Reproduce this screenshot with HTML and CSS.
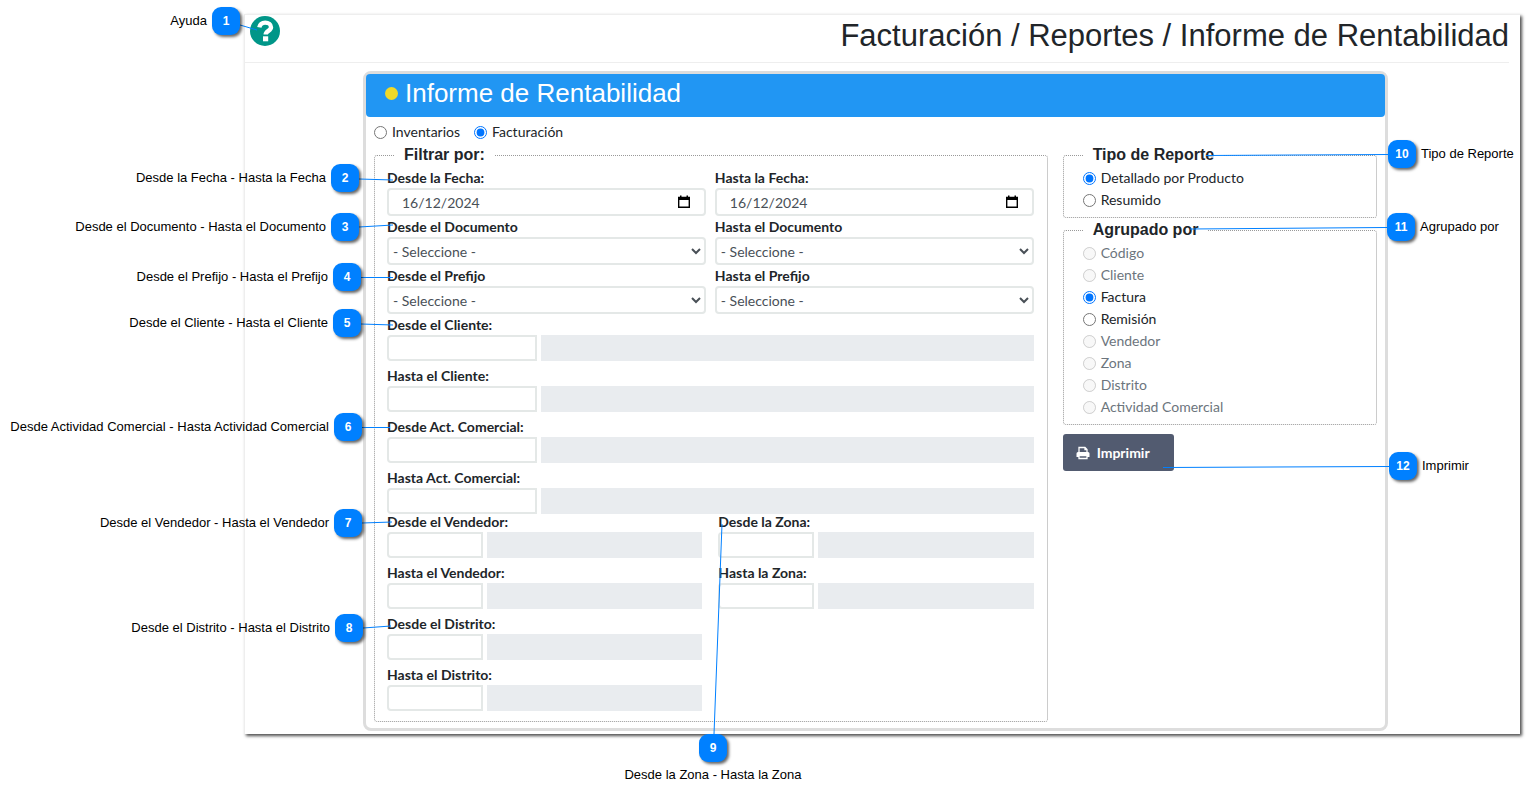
FILE: index.html
```
<!DOCTYPE html>
<html lang="es">
<head>
<meta charset="utf-8">
<title>Informe de Rentabilidad</title>
<link rel="stylesheet" href="styles.css">
</head>
<body>
<main class="sheet">
  <header class="top">
    <a class="help" href="#" aria-label="Ayuda">
      <svg viewBox="0 0 30 30" width="30" height="30" aria-hidden="true">
        <circle cx="15" cy="15" r="15" fill="#009688"/>
        <path d="M9.300 11.400C10 8 12.200 6.600 15.200 6.600C18.600 6.600 21 8.500 21 11.200C21 14.800 15.700 14.900 15.700 18.600" fill="none" stroke="#fff" stroke-width="4.400"/>
        <rect x="13" y="20.300" width="5.200" height="5" fill="#fff"/>
      </svg>
    </a>
    <h1>Facturación / Reportes / Informe de Rentabilidad</h1>
  </header>

  <form class="panel">
    <h2 class="panel-title"><span class="dot"></span>Informe de Rentabilidad</h2>
    <div class="modes">
      <label class="option"><input type="radio" name="modo">Inventarios</label>
      <label class="option"><input type="radio" name="modo" checked>Facturación</label>
    </div>
    <div class="columns">
      <fieldset class="box filters">
        <legend>Filtrar por:</legend>
        <div class="ranges">
          <div class="field"><label for="f1">Desde la Fecha:</label>
            <div class="date"><input id="f1" type="text" value="16/12/2024"><svg viewBox="0 0 14 14" width="14" height="14" aria-hidden="true"><path d="M1.7 2.5h10.6v9.8H1.7z" fill="none" stroke="#000" stroke-width="1.4"/><path d="M1 2h12v3H1zM3 .5h1.5V3H3zM9.500 .5H11V3H9.500z" fill="#000"/></svg></div></div>
          <div class="field"><label for="f2">Hasta la Fecha:</label>
            <div class="date"><input id="f2" type="text" value="16/12/2024"><svg viewBox="0 0 14 14" width="14" height="14" aria-hidden="true"><path d="M1.7 2.5h10.6v9.8H1.7z" fill="none" stroke="#000" stroke-width="1.4"/><path d="M1 2h12v3H1zM3 .5h1.5V3H3zM9.500 .5H11V3H9.500z" fill="#000"/></svg></div></div>
          <div class="field"><label for="d1">Desde el Documento</label><select id="d1"><option>- Seleccione -</option></select></div>
          <div class="field"><label for="d2">Hasta el Documento</label><select id="d2"><option>- Seleccione -</option></select></div>
          <div class="field"><label for="p1">Desde el Prefijo</label><select id="p1"><option>- Seleccione -</option></select></div>
          <div class="field"><label for="p2">Hasta el Prefijo</label><select id="p2"><option>- Seleccione -</option></select></div>
        </div>
        <div class="lookups wide">
          <div class="lookup"><label for="c1">Desde el Cliente:</label><div class="pair"><input id="c1" type="text"><input type="text" disabled aria-label="Nombre desde cliente"></div></div>
          <div class="lookup"><label for="c2">Hasta el Cliente:</label><div class="pair"><input id="c2" type="text"><input type="text" disabled aria-label="Nombre hasta cliente"></div></div>
          <div class="lookup"><label for="a1">Desde Act. Comercial:</label><div class="pair"><input id="a1" type="text"><input type="text" disabled aria-label="Nombre desde actividad"></div></div>
          <div class="lookup"><label for="a2">Hasta Act. Comercial:</label><div class="pair"><input id="a2" type="text"><input type="text" disabled aria-label="Nombre hasta actividad"></div></div>
        </div>
        <div class="split">
          <div class="lookups">
            <div class="lookup"><label for="v1">Desde el Vendedor:</label><div class="pair"><input id="v1" type="text"><input type="text" disabled aria-label="Nombre desde vendedor"></div></div>
            <div class="lookup"><label for="v2">Hasta el Vendedor:</label><div class="pair"><input id="v2" type="text"><input type="text" disabled aria-label="Nombre hasta vendedor"></div></div>
            <div class="lookup"><label for="t1">Desde el Distrito:</label><div class="pair"><input id="t1" type="text"><input type="text" disabled aria-label="Nombre desde distrito"></div></div>
            <div class="lookup"><label for="t2">Hasta el Distrito:</label><div class="pair"><input id="t2" type="text"><input type="text" disabled aria-label="Nombre hasta distrito"></div></div>
          </div>
          <div class="lookups">
            <div class="lookup"><label for="z1">Desde la Zona:</label><div class="pair"><input id="z1" type="text"><input type="text" disabled aria-label="Nombre desde zona"></div></div>
            <div class="lookup"><label for="z2">Hasta la Zona:</label><div class="pair"><input id="z2" type="text"><input type="text" disabled aria-label="Nombre hasta zona"></div></div>
          </div>
        </div>
      </fieldset>

      <div class="side">
        <fieldset class="box choices">
          <legend>Tipo de Reporte</legend>
          <label class="option"><input type="radio" name="tipo" checked>Detallado por Producto</label>
          <label class="option"><input type="radio" name="tipo">Resumido</label>
        </fieldset>
        <fieldset class="box choices">
          <legend>Agrupado por</legend>
          <label class="option off"><input type="radio" name="grupo" disabled>Código</label>
          <label class="option off"><input type="radio" name="grupo" disabled>Cliente</label>
          <label class="option"><input type="radio" name="grupo" checked>Factura</label>
          <label class="option"><input type="radio" name="grupo">Remisión</label>
          <label class="option off"><input type="radio" name="grupo" disabled>Vendedor</label>
          <label class="option off"><input type="radio" name="grupo" disabled>Zona</label>
          <label class="option off"><input type="radio" name="grupo" disabled>Distrito</label>
          <label class="option off"><input type="radio" name="grupo" disabled>Actividad Comercial</label>
        </fieldset>
        <button class="print" type="button">
          <svg viewBox="0 0 14 14" width="14" height="14" aria-hidden="true"><path d="M3 6.500V1.500h6L11 3.500v3M9 1.500v2h2" fill="none" stroke="#fff" stroke-width="1.300"/><path d="M2 6h10a1.500 1.500 0 0 1 1.500 1.500V11H11V9H3v2H.5V7.500A1.500 1.500 0 0 1 2 6z" fill="#fff"/><path d="M3 9.500h8v3H3z" fill="none" stroke="#fff" stroke-width="1.300"/></svg>
          Imprimir
        </button>
      </div>
    </div>
  </form>
</main>

<svg class="leads" width="1529" height="799" aria-hidden="true">
  <path d="M240 25L257 30M359 179L393 180M359 227L393 225M361 277.500H393M361 324L393 325M362 427.500H390M362 523L392 522M363 628L391 626M722 524L714 734M1206 155.500L1388 154.500M1190 229L1387 227.500M1163 467.500L1389 466.500"/>
</svg>
<div class="note before n1"><span>Ayuda</span><b>1</b></div>
<div class="note before n2"><span>Desde la Fecha - Hasta la Fecha</span><b>2</b></div>
<div class="note before n3"><span>Desde el Documento - Hasta el Documento</span><b>3</b></div>
<div class="note before n4"><span>Desde el Prefijo - Hasta el Prefijo</span><b>4</b></div>
<div class="note before n5"><span>Desde el Cliente - Hasta el Cliente</span><b>5</b></div>
<div class="note before n6"><span>Desde Actividad Comercial - Hasta Actividad Comercial</span><b>6</b></div>
<div class="note before n7"><span>Desde el Vendedor - Hasta el Vendedor</span><b>7</b></div>
<div class="note before n8"><span>Desde el Distrito - Hasta el Distrito</span><b>8</b></div>
<div class="note below n9"><b>9</b><span>Desde la Zona - Hasta la Zona</span></div>
<div class="note n10"><b>10</b><span>Tipo de Reporte</span></div>
<div class="note n11"><b>11</b><span>Agrupado por</span></div>
<div class="note n12"><b>12</b><span>Imprimir</span></div>
</body>
</html>
```

FILE: styles.css
```
* { box-sizing: border-box; }

body {
  margin: 0;
  min-height: 100vh;
  padding: 14px 9px 64px 244px;
  position: relative;
  background: #fff;
  color: #212529;
  font: 14px/20px Lato, sans-serif;
}

.sheet {
  padding: 0 11px 3px 0;
  border: 1px solid #eee;
  border-right-width: 0;
  border-bottom-width: 0;
  box-shadow: 2px 2px 3px rgba(0, 0, 0, .7);
}

.top {
  display: flex;
  justify-content: space-between;
  height: 48px;
  padding-left: 5px;
  border-bottom: 1px solid #eee;
}
.help { padding-top: 1px; }
.help svg { display: block; }
h1 {
  margin: 0;
  font: 400 31px/42px "Liberation Sans", Arial, sans-serif;
}

.panel {
  margin: 8px 121px 0 118px;
  padding-bottom: 6px;
  border: 3px solid #ddd;
  border-radius: 8px;
}
.panel-title {
  display: flex;
  align-items: center;
  gap: 7px;
  margin: 0;
  padding: 0 19px 4px;
  border-radius: 4px;
  background: #2196f3;
  color: #fff;
  font: 400 26px/39px "Liberation Sans", Arial, sans-serif;
}
.dot { width: 13px; height: 13px; border-radius: 50%; background: #f0d928; }

.modes { display: flex; gap: 14px; padding: 4px 8px 2px; }
.option { display: flex; align-items: center; gap: 5px; line-height: 22px; }
.option input { width: 13px; height: 13px; margin: 0; }
.off { color: #6c757d; }

.columns {
  display: grid;
  grid-template-columns: minmax(0, 15fr) minmax(0, 7fr);
  gap: 15px;
  padding: 0 8px;
}
.box {
  min-width: 0;
  margin: 0;
  border: 1px dotted #999;
  border-radius: 3px;
}
.box legend {
  padding: 0 10px;
  font: 700 16px/20px "Liberation Sans", Arial, sans-serif;
}
.filters { padding: 2px 13px 10px 12px; }
.filters legend { margin-left: 7px; }
.choices { padding: 2px 19px 6px; }

.ranges {
  display: grid;
  grid-template-columns: 1fr 1fr;
  column-gap: 9px;
}
.field { display: grid; }
.field label { line-height: 21px; font-weight: 700; }
input[type="text"], select {
  width: 100%;
  height: 28px;
  min-width: 0;
  border: 2px solid #e4e8e7;
  border-radius: 4px;
  background: #fff;
  color: #495057;
  font: 14px Lato, sans-serif;
}
.date { display: grid; align-items: center; }
.date input, .date svg { grid-area: 1 / 1; }
.date input { padding: 0 13px; }
.date svg { justify-self: end; margin-right: 15px; }

.lookups { display: grid; gap: 5px; align-content: start; }
.wide { margin-top: 1px; }
.lookup label { display: block; font-weight: 700; }
.pair { display: grid; grid-template-columns: 96px 1fr; gap: 4px; }
.wide .pair { grid-template-columns: 150px 1fr; }
.pair input[type="text"] { height: 26px; border-radius: 4px 0 0 4px; }
.pair input[type="text"]:disabled { border: 0; border-radius: 0; background: #e9ecef; }
.split {
  display: grid;
  grid-template-columns: 1fr 1fr;
  gap: 16px;
  margin-top: -2px;
}

.side { display: flex; flex-direction: column; gap: 2px; }
.print {
  display: flex;
  align-items: center;
  align-self: flex-start;
  gap: 7px;
  height: 37px;
  margin-top: 7px;
  padding: 0 24px 0 13px;
  border: 0;
  border-radius: 3px;
  background: #525b70;
  color: #fff;
  font: 700 14px Lato, sans-serif;
}

/* Numbered callouts laid over the form */
.leads { position: absolute; top: 0; left: 0; fill: none; stroke: #0080ff; stroke-width: 1; pointer-events: none; }
.note {
  position: absolute;
  display: flex;
  align-items: center;
  gap: 5px;
  color: #000;
  font: 13px/16px "Liberation Sans", Arial, sans-serif;
  white-space: nowrap;
}
.note b {
  flex: none;
  width: 28px;
  border-radius: 9px;
  background: #0080ff;
  box-shadow: 2px 2px 3px rgba(0, 0, 0, .6);
  color: #fff;
  font-size: 12px;
  line-height: 28px;
  text-align: center;
}
.before { left: 0; justify-content: flex-end; }
.below { flex-direction: column; width: 200px; }
.n1 { top: 7px; width: 240px; }
.n2 { top: 164px; width: 359px; }
.n3 { top: 213px; width: 359px; }
.n4 { top: 263px; width: 361px; }
.n5 { top: 309px; width: 361px; }
.n6 { top: 413px; width: 362px; }
.n7 { top: 509px; width: 362px; }
.n8 { top: 614px; width: 363px; }
.n9 { top: 734px; left: 613px; }
.n10 { top: 140px; left: 1388px; }
.n11 { top: 213px; left: 1387px; }
.n12 { top: 452px; left: 1389px; }
```
